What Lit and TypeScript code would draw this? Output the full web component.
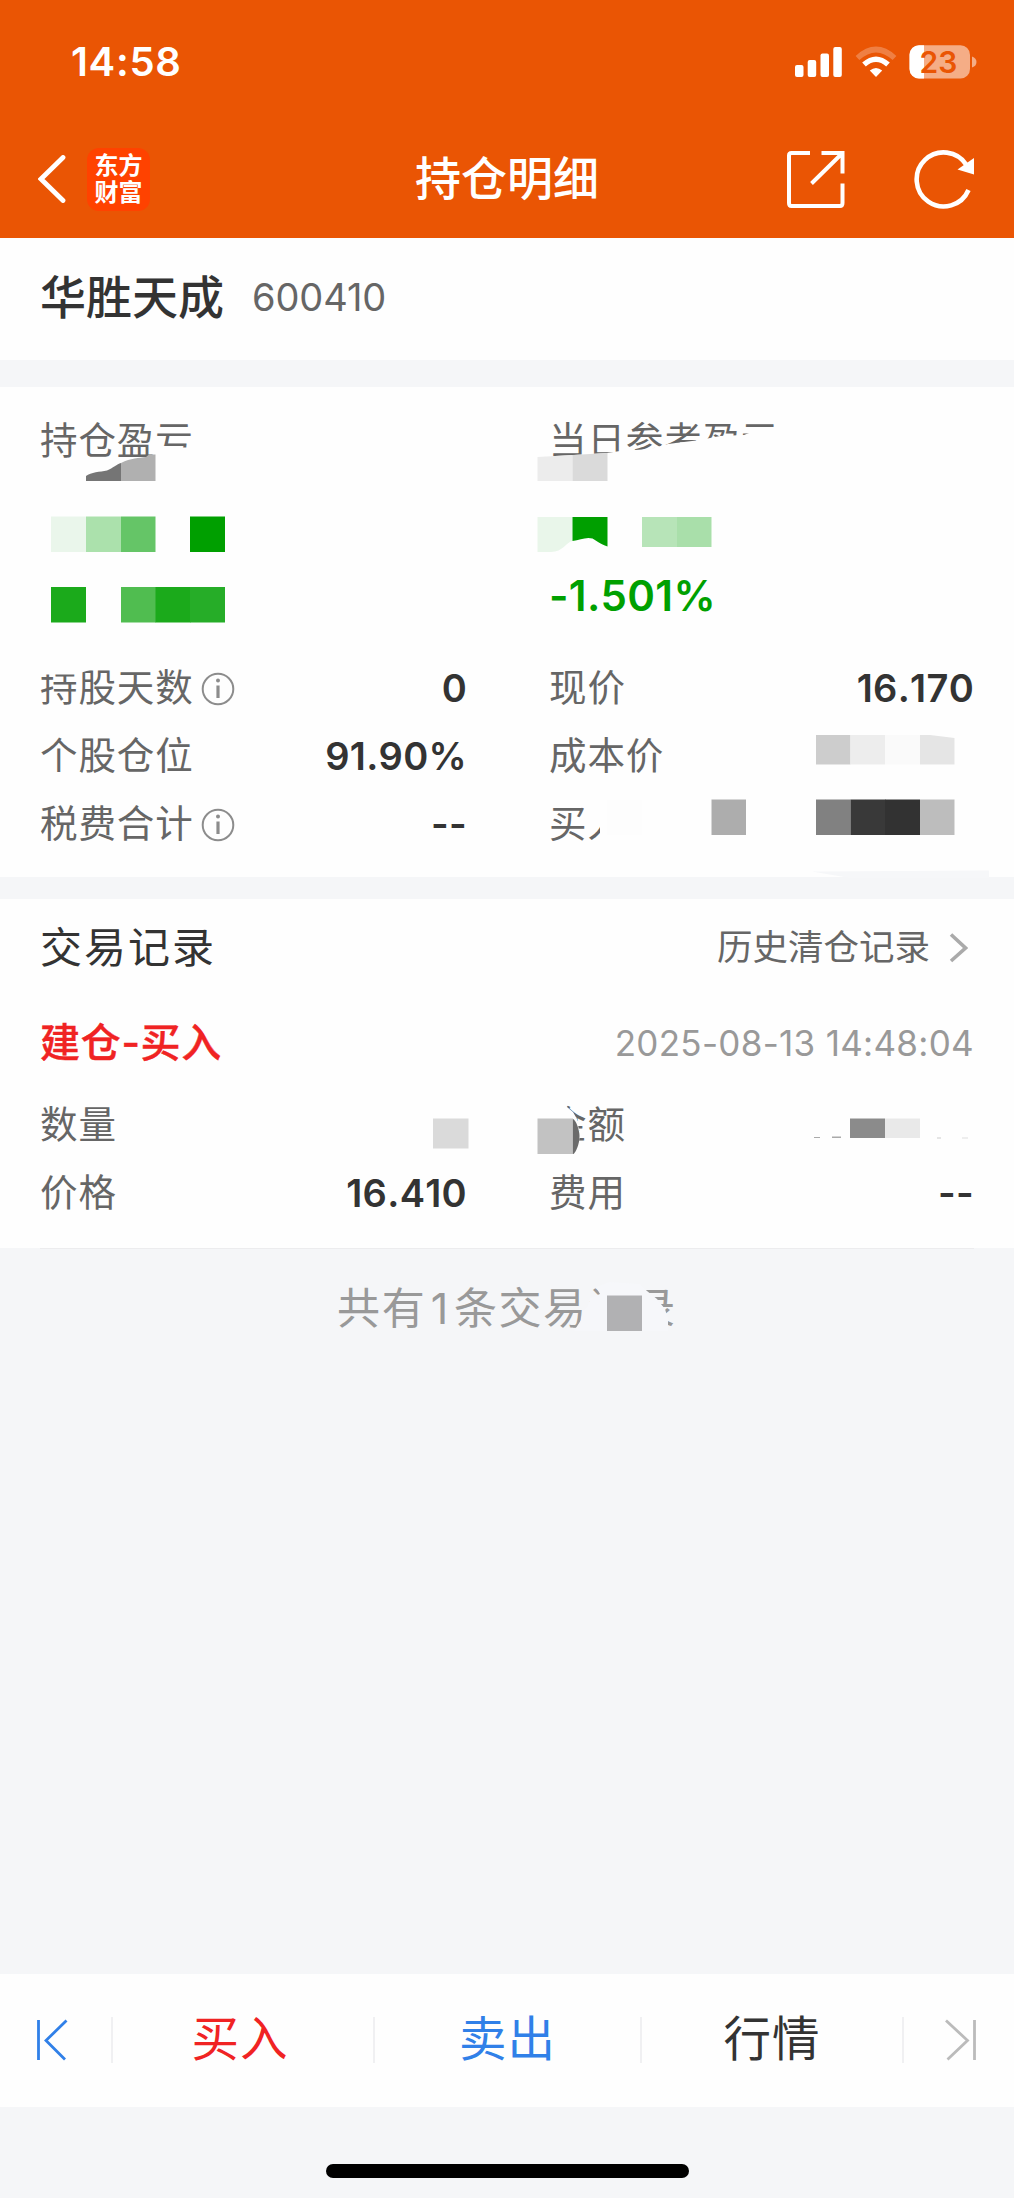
import { LitElement, html, svg, css } from "lit";
import { customElement, property } from "lit/decorators.js";

interface Block {
  x: number;
  y: number;
  w: number;
  h: number;
  fill: string;
}

const blocks: Block[] = [
  { x: 51, y: 516.5, w: 35, h: 35.5, fill: "#eaf6eb" },
  { x: 86, y: 516.5, w: 35, h: 35.5, fill: "#abe1ac" },
  { x: 121, y: 516.5, w: 34.5, h: 35.5, fill: "#65c567" },
  { x: 190, y: 516.5, w: 35, h: 35.5, fill: "#009f00" },
  { x: 51, y: 587, w: 35, h: 35.5, fill: "#1baa1b" },
  { x: 121, y: 587, w: 35, h: 35.5, fill: "#50bd50" },
  { x: 155.5, y: 587, w: 35, h: 35.5, fill: "#1baa1b" },
  { x: 190, y: 587, w: 35, h: 35.5, fill: "#26ad28" },
  { x: 642, y: 517, w: 35, h: 30, fill: "#b7e4b8" },
  { x: 677, y: 517, w: 34.5, h: 30, fill: "#a9dfaa" },
  { x: 816, y: 735, w: 34.5, h: 29.5, fill: "#cdcdcd" },
  { x: 850.5, y: 735, w: 34.5, h: 29.5, fill: "#ededed" },
  { x: 885, y: 735, w: 35, h: 29.5, fill: "#fafafa" },
  { x: 607, y: 800, w: 35, h: 35, fill: "#fdfdfd" },
  { x: 711.5, y: 799.5, w: 34.5, h: 35.5, fill: "#adadad" },
  { x: 816, y: 799.5, w: 34.5, h: 35.5, fill: "#818181" },
  { x: 850.5, y: 799.5, w: 35, h: 35.5, fill: "#393939" },
  { x: 885, y: 799.5, w: 35, h: 35.5, fill: "#323232" },
  { x: 920, y: 799.5, w: 34.5, h: 35.5, fill: "#bdbdbd" },
  { x: 433, y: 1118.5, w: 35.5, h: 30, fill: "#dadada" },
  { x: 537.5, y: 1118.5, w: 35, h: 35.5, fill: "#c2c2c2" },
  { x: 850, y: 1118.5, w: 35, h: 19.5, fill: "#8b8b8b" },
  { x: 885, y: 1118.5, w: 35, h: 19.5, fill: "#e9e9e9" },
  { x: 814, y: 1137, w: 6, h: 1, fill: "#aaa" },
  { x: 832, y: 1136.5, w: 9, h: 1.5, fill: "#aaa" },
  { x: 937, y: 1137.5, w: 4, h: 1, fill: "#ccc" },
  { x: 962, y: 1137.5, w: 6, h: 1, fill: "#ddd" },
  { x: 607, y: 1295.5, w: 35, h: 35.5, fill: "#b1b1b3" },
];

/** Privacy layer: brushed-out areas and mosaic blocks over the figures. */
@customElement("privacy-mask")
export class PrivacyMask extends LitElement {
  static styles = css`
    :host {
      position: absolute;
      inset: 0;
      pointer-events: none;
    }
    svg {
      display: block;
    }
  `;

  render() {
    return html`<svg width="1014" height="2198" viewBox="0 0 1014 2198">
      <g fill="#fefefe">
        <path d="M156 447.5H200V464H156Z" />
        <path d="M536 457L574 455L607 453L620 451L650 449L668 444L700 440L720 436L744 435L749 433L780 430V466H536Z" />
        <path d="M38 664H110L80 673L76 674.5H38Z" />
        <path d="M584 803H720V848H600V826L592 828L586 832Z" />
        <path d="M540 1098L562 1102L567 1107L573 1112L577 1119L580 1136L578 1146L574 1155H540Z" />
      </g>
      <path fill="#f6f7fa" d="M588 1306L590 1298L600 1294L596 1287L610 1282L640 1284L647 1291L657 1299L665 1309L668 1319V1331H574L581 1320L583 1310Z" />
      <path fill="#f6f7f9" d="M812 871.5L989 870.5V878H850Z" />
      <path fill="#757575" d="M86 476C91 472 100 472 107 470.5C113 468 117 464 121 463V481H86Z" />
      <path fill="#b0b0b0" d="M121 463C131 458 139 458 146 457L149 454.5H155.5V481H121Z" />
      <path fill="#ececec" d="M537.5 457L572.5 455V481H537.5Z" />
      <path fill="#dadada" d="M572.5 455L607.5 453V481H572.5Z" />
      <path fill="#e9f6ea" d="M537.5 517H572.5V541C566 542 563 552 551 552H537.5Z" />
      <path fill="#009f00" d="M572.5 517H607.5V546.5C600 544 597 541 592.500 538.5C586 536.500 580 540 572.5 541Z" />
      <path fill="#e5e5e5" d="M920 735H930L954.5 738V764.5H920Z" />
      <path fill="#6b6b6b" d="M572.5 1118.500C576 1120 579.500 1130 579.500 1136C579.500 1144 576 1152 573.500 1154H572.500Z" />
      ${blocks.map(
        (b) => svg`<rect x=${b.x} y=${b.y} width=${b.w} height=${b.h} fill=${b.fill} />`
      )}
    </svg>`;
  }
}

@customElement("data-row")
export class DataRow extends LitElement {
  @property() label = "";
  @property() value = "";
  @property({ type: Boolean }) info = false;

  static styles = css`
    :host {
      display: flex;
      align-items: center;
      justify-content: space-between;
      height: 68px;
    }
    .label {
      display: flex;
      align-items: center;
      gap: 7px;
      padding-bottom: 1px;
      font-size: 37.5px;
      letter-spacing: 0.9px;
      color: #666;
      white-space: nowrap;
    }
    .value {
      padding-top: 1px;
      font-size: 38px;
      font-weight: 600;
      font-kerning: none;
      letter-spacing: 0.3px;
      color: #333;
      white-space: nowrap;
    }
    svg {
      display: block;
      margin-top: 3px;
    }
  `;

  render() {
    return html`
      <span class="label">
        ${this.label}
        ${this.info
          ? html`<svg width="34" height="34" viewBox="0 0 34 34" fill="none" stroke="#8c8c8c">
              <circle cx="17" cy="17" r="15.300" stroke-width="2" />
              <path d="M17 13.500V26" stroke-width="3.200" />
              <circle cx="17" cy="8.500" r="2" fill="#8c8c8c" stroke="none" />
            </svg>`
          : ""}
      </span>
      <span class="value">${this.value}</span>
    `;
  }
}

@customElement("app-root")
export class AppRoot extends LitElement {
  static styles = css`
    :host {
      display: flex;
      flex-direction: column;
      position: relative;
      width: 1014px;
      height: 2198px;
      overflow: hidden;
      background: #f5f6f8;
      font-family: Inter, "Noto Sans CJK SC", sans-serif;
      line-height: 1.2;
      color: #333;
    }
    svg {
      display: block;
    }
    .top {
      height: 238px;
      background: #ea5504;
      color: #fff;
    }
    .status {
      display: flex;
      align-items: center;
      justify-content: space-between;
      height: 124px;
      padding: 0 36px 0 71px;
    }
    .time {
      font-size: 40px;
      font-weight: 600;
      letter-spacing: 0.7px;
    }
    .nav {
      display: grid;
      grid-template-columns: 1fr auto 1fr;
      align-items: center;
      height: 110px;
    }
    .nav-left {
      display: flex;
      align-items: center;
      gap: 21px;
      padding-left: 38px;
    }
    .logo {
      display: flex;
      flex-direction: column;
      justify-content: center;
      align-items: center;
      width: 63px;
      height: 63px;
      border-radius: 12px;
      background: #ff4200;
      font-size: 24px;
      font-weight: 700;
      line-height: 27px;
    }
    .title {
      font-size: 46px;
      font-weight: 500;
    }
    .nav-right {
      display: flex;
      align-items: center;
      justify-content: flex-end;
      gap: 68px;
      padding-right: 40px;
    }
    .card {
      background: #fefefe;
      padding: 0 42px 0 40px;
    }
    .stock {
      display: flex;
      align-items: center;
      gap: 28px;
      height: 120px;
      padding-bottom: 2px;
    }
    .name {
      font-size: 46px;
      font-weight: 500;
    }
    .code {
      font-size: 38px;
      letter-spacing: -0.1px;
      color: #666;
    }
    .summary {
      margin-top: 27px;
      padding-top: 20px;
      padding-bottom: 19px;
    }
    .cols {
      display: grid;
      grid-template-columns: 427px 425px;
      column-gap: 82px;
      margin-right: -2px;
    }
    .figures {
      height: 155px;
      margin-bottom: 24px;
      display: flex;
      flex-direction: column;
      justify-content: flex-end;
    }
    .percent {
      line-height: 68px;
      font-size: 42px;
      font-weight: 600;
      font-kerning: none;
      letter-spacing: 0.3px;
      color: #00a000;
    }
    .records {
      height: 349px;
      margin-top: 22px;
    }
    .bar {
      display: flex;
      align-items: center;
      justify-content: space-between;
    }
    .head {
      height: 98px;
    }
    .head-title {
      font-size: 42px;
      letter-spacing: 2px;
    }
    .more {
      display: flex;
      align-items: center;
      gap: 18px;
      padding-right: 4px;
      font-size: 35.5px;
      color: #666;
    }
    .entry {
      height: 92px;
      margin-bottom: 2px;
    }
    .action {
      font-size: 40px;
      font-weight: 500;
      letter-spacing: 0.7px;
      color: #f02323;
      -webkit-text-stroke: 0.4px #f02323;
    }
    .date {
      margin-right: -2px;
      font-size: 35px;
      letter-spacing: 0.3px;
      color: #999;
    }
    .end {
      flex: 1;
      margin: 0 40px;
      border-top: 1px solid #ececee;
      padding-top: 34px;
      text-align: center;
      font-size: 43px;
      line-height: 50px;
      letter-spacing: 1.6px;
      color: #999;
    }
    .count {
      margin: 0 4px 0 4.5px;
    }
    .tabs {
      display: grid;
      grid-template-columns: 113px 262px 267px 262px 110px;
      align-items: center;
      height: 133px;
      background: #fefefe;
    }
    .tab {
      display: flex;
      align-items: center;
      justify-content: center;
      height: 46px;
      font-size: 47.5px;
      line-height: 42px;
      letter-spacing: 1px;
      border-right: 2px solid #f0f0f2;
    }
    .tab span {
      padding-bottom: 2px;
    }
    .tab:first-child {
      padding-right: 6px;
    }
    .tab:last-child {
      border-right: 0;
      padding-left: 4px;
    }
    .tab.buy {
      color: #f02323;
      padding-right: 6px;
    }
    .sell {
      color: #3080e8;
    }
    .home {
      height: 91.5px;
      display: flex;
      justify-content: center;
      align-items: flex-start;
    }
    .home-bar {
      width: 363px;
      height: 14px;
      margin-top: 57px;
      border-radius: 7px;
      background: #000;
    }
  `;

  render() {
    return html`
      <header class="top">
        <div class="status">
          <span class="time">14:58</span>
          <svg width="183" height="36" viewBox="795 44 183 36">
            <g fill="#fff">
              <rect x="795" y="65" width="8.500" height="12" rx="2" />
              <rect x="807.700" y="60" width="8.500" height="17" rx="2" />
              <rect x="820.500" y="53.500" width="8.500" height="23.500" rx="2" />
              <rect x="833.300" y="47" width="8.500" height="30" rx="2" />
              <path d="M876 77L869.800 70.500Q876 65.500 882.200 70.500Z" />
            </g>
            <path d="M864 64.500Q876 54 888 64.500" fill="none" stroke="#fff" stroke-width="5.500" />
            <path d="M857.500 58Q876 41 894.500 58" fill="none" stroke="#fff" stroke-opacity=".25" stroke-width="5.500" />
            <rect x="909.500" y="45.300" width="60.500" height="33.200" rx="9.500" fill="#f5ad86" />
            <path d="M924 45.300H919A9.500 9.500 0 0 0 909.500 54.800V69A9.500 9.500 0 0 0 919 78.500H924Z" fill="#fff" />
            <path d="M972 56.500Q976.500 58 976.500 62T972 67.500Z" fill="#f5ad86" />
            <text x="938.500" y="73" text-anchor="middle" font-size="30" font-weight="600" fill="#ea5504">23</text>
          </svg>
        </div>
        <nav class="nav">
          <div class="nav-left">
            <svg width="28" height="48" viewBox="38 155 28 48" fill="none" stroke="#fff" stroke-width="4.800" stroke-linecap="round">
              <path d="M63 157.500L41 179L63 200.500" />
            </svg>
            <div class="logo"><span>东方</span><span>财富</span></div>
          </div>
          <span class="title">持仓明细</span>
          <div class="nav-right">
            <svg width="60" height="60" viewBox="786.500 149 60 60" fill="none" stroke="#fff" stroke-width="4">
              <path d="M810.500 153H792Q789.500 153 789.500 155.500V203Q789.500 206 792 206H840.500Q843 206 843 203V183.500" />
              <path d="M822 153H843V173.500M841.500 154.500L812 183.500" />
            </svg>
            <svg width="60" height="60" viewBox="913 149 60 60">
              <path d="M967.500 190A27 27 0 1 1 965.500 165" fill="none" stroke="#fff" stroke-width="4.600" />
              <path d="M973 158V174.500L956.500 169.500Z" fill="#fff" />
            </svg>
          </div>
        </nav>
      </header>

      <section class="card stock">
        <span class="name">华胜天成</span>
        <span class="code">600410</span>
      </section>

      <section class="card summary">
        <div class="cols">
          <data-row label="持仓盈亏"></data-row>
          <data-row label="当日参考盈亏"></data-row>
          <div class="figures"></div>
          <div class="figures"><span class="percent">-1.501%</span></div>
          <data-row label="持股天数" value="0" info></data-row>
          <data-row label="现价" value="16.170"></data-row>
          <data-row label="个股仓位" value="91.90%"></data-row>
          <data-row label="成本价"></data-row>
          <data-row label="税费合计" value="--" info></data-row>
          <data-row label="买入"></data-row>
        </div>
      </section>

      <section class="card records">
        <div class="bar head">
          <span class="head-title">交易记录</span>
          <span class="more">
            历史清仓记录
            <svg width="20" height="30" viewBox="948 933 20 30" fill="none" stroke="#aaa" stroke-width="3.600">
              <path d="M951 934.500L965.500 948L951 961" />
            </svg>
          </span>
        </div>
        <div class="bar entry">
          <span class="action">建仓-买入</span>
          <span class="date">2025-08-13 14:48:04</span>
        </div>
        <div class="cols">
          <data-row label="数量"></data-row>
          <data-row label="金额"></data-row>
          <data-row label="价格" value="16.410"></data-row>
          <data-row label="费用" value="--"></data-row>
        </div>
      </section>

      <div class="end">共有<span class="count">1</span>条交易记录</div>

      <footer class="tabs">
        <div class="tab">
          <svg width="34" height="44" viewBox="36 2017 34 44" fill="none" stroke="#3080e8" stroke-width="2.800">
            <path d="M38.500 2019V2059M66.500 2019.500L46 2039.500L65 2058.500" />
          </svg>
        </div>
        <div class="tab buy"><span>买入</span></div>
        <div class="tab sell"><span>卖出</span></div>
        <div class="tab"><span>行情</span></div>
        <div class="tab">
          <svg width="34" height="44" viewBox="944 2017 34 44" fill="none" stroke="#bbb" stroke-width="2.800">
            <path d="M974.500 2019V2059M946 2019.500L967.500 2039.500L947.500 2058.500" />
          </svg>
        </div>
      </footer>
      <div class="home"><div class="home-bar"></div></div>

      <privacy-mask></privacy-mask>
    `;
  }
}
